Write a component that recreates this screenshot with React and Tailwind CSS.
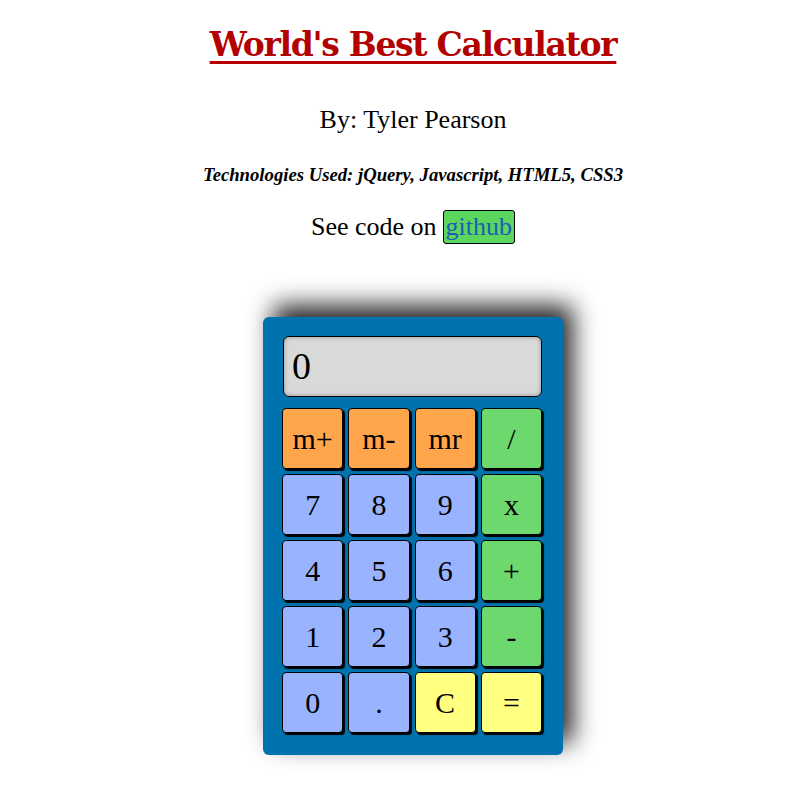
import React, { useState } from 'react';

const KEYS = [
  ['m+', 'orange'], ['m-', 'orange'], ['mr', 'orange'], ['/', 'green'],
  ['7', 'blue'], ['8', 'blue'], ['9', 'blue'], ['x', 'green'],
  ['4', 'blue'], ['5', 'blue'], ['6', 'blue'], ['+', 'green'],
  ['1', 'blue'], ['2', 'blue'], ['3', 'blue'], ['-', 'green'],
  ['0', 'blue'], ['.', 'blue'], ['C', 'yellow'], ['=', 'yellow'],
];

const KEY_COLORS = {
  orange: 'bg-[#ffa64d]',
  green: 'bg-[#6dd86d]',
  blue: 'bg-[#99b3ff]',
  yellow: 'bg-[#ffff80]',
};

const App = () => {
  const [display] = useState('0');

  return (
    <div className="min-h-screen bg-white text-black pl-[14px] font-['Liberation_Serif',serif]">
      <div className="flex flex-col items-center">
        {/* Title */}
        <h1 className="mt-[20px] text-[#b30000] text-[33px] font-bold underline decoration-[3px] underline-offset-[5px] tracking-[-1.3px] font-['DejaVu_Serif',serif]">
          World's Best Calculator
        </h1>

        <p className="mt-[37px] text-[26px] leading-none">By: Tyler Pearson</p>

        <p className="mt-[33px] text-[18.7px] font-bold italic leading-none">
          Technologies Used: jQuery, Javascript, HTML5, CSS3
        </p>

        <p className="mt-[26px] text-[26px] leading-none flex items-center">
          See code on
          <a
            href="#"
            className="ml-[6px] px-[2px] h-[34px] flex items-center bg-[#5cd65c] border border-black rounded-[3px] text-[#1a5fb4]"
          >
            github
          </a>
        </p>

        {/* Calculator */}
        <div className="mt-[73px] w-[300px] bg-[#0073ae] rounded-[6px] pt-[19px] pb-[22px] pl-[19px] pr-[21px] shadow-[10px_-12px_24px_rgba(0,0,0,0.85)]">
          <div className="ml-px h-[61px] bg-[#d9d9d9] border border-black rounded-[6px] flex items-center px-[8px] text-[38px] shadow-[inset_0_0_4px_rgba(0,0,0,0.35)]">
            {display}
          </div>
          <div className="mt-[11px] grid grid-cols-4 gap-[5px]">
            {KEYS.map(([label, color]) => (
              <button
                key={label}
                className={`h-[61px] ${KEY_COLORS[color]} border border-black rounded-[4px] text-[30px] shadow-[2px_2px_1px_#000] flex items-center justify-center`}
              >
                {label}
              </button>
            ))}
          </div>
        </div>
        <div className="h-[60px]"></div>
      </div>
    </div>
  );
};

export default App;
